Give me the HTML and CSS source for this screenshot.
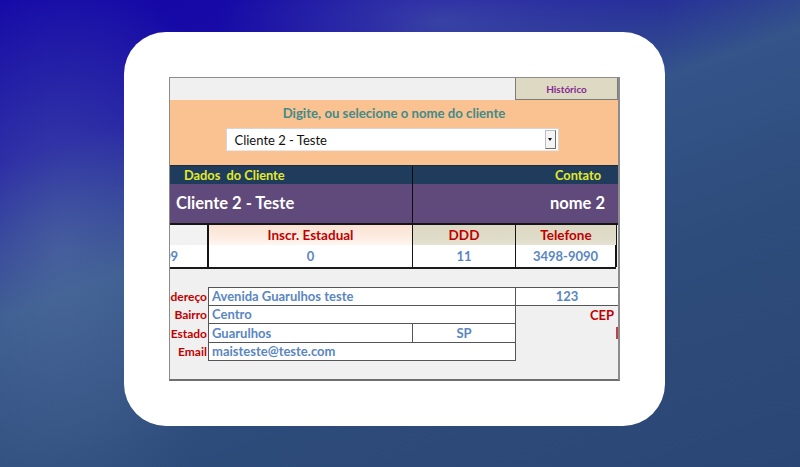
FILE: index.html
```html
<!DOCTYPE html>
<html lang="pt-BR">
<head>
<meta charset="utf-8">
<title>Cadastro de Clientes</title>
<link rel="stylesheet" href="styles.css">
</head>
<body>
<div class="card">
  <div class="sheet">
    <div class="toprow">
      <div class="histbtn">Histórico</div>
    </div>
    <div class="search">
      <div class="search-title">Digite, ou selecione o nome do cliente</div>
      <div class="combo">
        <span class="combo-text">Cliente 2 - Teste</span>
        <span class="combo-btn"><span class="tri"></span></span>
      </div>
    </div>
    <div class="hdr">
      <div class="hdr-l">Dados&nbsp; do Cliente</div>
      <div class="hdr-r">Contato</div>
    </div>
    <div class="names">
      <div class="name-l">Cliente 2 - Teste</div>
      <div class="name-r">nome 2</div>
    </div>
    <div class="grid4 colhead">
      <div class="ch c1"></div>
      <div class="ch c2">Inscr. Estadual</div>
      <div class="ch c3">DDD</div>
      <div class="ch c4">Telefone</div>
    </div>
    <div class="grid4 datarow">
      <div class="dv c1"><span>/0001-09</span></div>
      <div class="dv c2">0</div>
      <div class="dv c3">11</div>
      <div class="dv c4">3498-9090</div>
    </div>
    <div class="lower">
      <div class="addr">
        <div class="lbl">Endereço</div>
        <div class="cell span2 first">Avenida Guarulhos teste</div>
        <div class="cell num first">123<span class="clip">:</span></div>

        <div class="lbl">Bairro</div>
        <div class="cell span2">Centro</div>
        <div class="lbl cep">CEP</div>

        <div class="lbl">Estado</div>
        <div class="cell">Guarulhos</div>
        <div class="cell ctr">SP</div>
        <div class="mark"><span></span></div>

        <div class="lbl">Email</div>
        <div class="cell span2">maisteste@teste.com</div>
        <div class="empty"></div>
      </div>
    </div>
  </div>
</div>
</body>
</html>
```

FILE: styles.css
```css
html, body {
  margin: 0;
  padding: 0;
}
body {
  width: 800px;
  height: 467px;
  overflow: hidden;
  font-family: Lato, "Open Sans", "Liberation Sans", sans-serif;
  background:
    radial-gradient(ellipse 260px 420px at 60px 250px, rgba(90,120,165,0.55), rgba(90,120,165,0) 70%),
    radial-gradient(ellipse 320px 120px at 440px 20px, rgba(90,120,165,0.45), rgba(90,120,165,0) 70%),
    linear-gradient(160deg, #1204a8 0%, #1a0ea6 22%, #34548a 42%, #2e4c7b 65%, #2a4674 100%);
}
.card {
  box-sizing: border-box;
  margin: 32px 0 0 124px;
  width: 541px;
  height: 394px;
  background: #ffffff;
  border-radius: 42px;
  padding: 45px 0 0 45px;
}
.sheet {
  box-sizing: border-box;
  width: 451px;
  height: 304px;
  background: #f0f0f0;
  border: 1px solid #8c8c8c;
  border-right: 2px solid #8c8c8c;
  border-bottom: 2px solid #6e6e6e;
  display: flex;
  flex-direction: column;
}
.toprow {
  height: 22px;
  display: flex;
  justify-content: flex-end;
}
.histbtn {
  box-sizing: border-box;
  width: 103px;
  height: 22px;
  background: #ddd9c3;
  border: 1px solid #7a7a7a;
  border-top: 0;
  color: #862a90;
  font-size: 10px;
  font-weight: 700;
  display: flex;
  align-items: center;
  justify-content: center;
}
.search {
  height: 65px;
  background: #fac191;
  display: flex;
  flex-direction: column;
  align-items: center;
  border-bottom: 1px solid #1d2b3a;
}
.search-title {
  margin-top: 5px;
  color: #428b88;
  font-size: 13.2px;
  font-weight: 700;
  line-height: 17px;
}
.combo {
  box-sizing: border-box;
  margin-top: 6px;
  margin-right: 4px;
  width: 333px;
  height: 23px;
  background: #fff;
  border: 1px solid #d6d6d6;
  border-bottom-color: #e8e8e8;
  display: flex;
  align-items: center;
}
.combo-text {
  flex: 1;
  padding-left: 8px;
  font-size: 13px;
  color: #111;
}
.combo-btn {
  box-sizing: border-box;
  width: 11px;
  height: 19px;
  margin-right: 2px;
  background: #f4f4f4;
  border: 1px solid #bdbdbd;
  border-right-color: #6d6d6d;
  border-bottom-color: #6d6d6d;
  display: flex;
  align-items: center;
  justify-content: center;
}
.tri {
  width: 0;
  height: 0;
  border-left: 2.5px solid transparent;
  border-right: 2.5px solid transparent;
  border-top: 3px solid #111;
}
.hdr {
  display: grid;
  grid-template-columns: 243px 1fr;
  height: 18px;
  background: #1f3c5d;
}
.hdr-l, .hdr-r {
  color: #e2ec2a;
  font-size: 12.8px;
  font-weight: 700;
  line-height: 18px;
}
.hdr-l {
  padding-left: 14px;
  border-right: 1px solid #0d0d0d;
}
.hdr-r {
  text-align: right;
  padding-right: 17px;
}
.names {
  display: grid;
  grid-template-columns: 243px 1fr;
  height: 39px;
  background: #604a7b;
  border-bottom: 2px solid #151515;
}
.name-l, .name-r {
  color: #ffffff;
  font-size: 16.5px;
  font-weight: 700;
  line-height: 39px;
}
.name-l {
  padding-left: 6px;
  border-right: 1px solid #0d0d0d;
}
.name-r {
  text-align: right;
  padding-right: 13px;
}
.grid4 {
  display: grid;
  grid-template-columns: 39px 204px 103px 101px 1fr;
}
.colhead {
  height: 20px;
}
.ch {
  box-sizing: border-box;
  color: #c00000;
  font-size: 13.5px;
  font-weight: 700;
  line-height: 20px;
  text-align: center;
  border-right: 1px solid #141414;
}
.ch.c1 {
  background: #f2f2f2;
  border-right-width: 2px;
}
.ch.c2 {
  background: linear-gradient(#fbe2d2, #fdeee5 70%, #fff6f0);
}
.ch.c3, .ch.c4 {
  background: linear-gradient(#dcd8c3, #dfdcc9 70%, #e6e3d4);
}
.datarow {
  height: 22px;
  border-bottom: 2px solid #1a1a1a;
  margin-right: 2px;
}
.dv {
  box-sizing: border-box;
  background: #fff;
  color: #5a86c1;
  font-size: 13px;
  font-weight: 700;
  line-height: 22px;
  text-align: center;
  border-right: 1px solid #141414;
}
.dv.c1 {
  border-right-width: 2px;
  display: flex;
  justify-content: flex-end;
  overflow: hidden;
  padding-right: 29px;
  white-space: nowrap;
}
.dv.c4 {
  border-right-width: 2px;
}
.lower {
  flex: 1;
  padding-top: 18px;
}
.addr {
  display: grid;
  grid-template-columns: 39px 204px 103px 102px;
  grid-auto-rows: 18.5px;
}
.lbl {
  display: flex;
  justify-content: flex-end;
  align-items: center;
  overflow: hidden;
  white-space: nowrap;
  color: #c00000;
  font-size: 12px;
  font-weight: 700;
  padding-right: 1px;
  border-right: 1px solid #555;
}
.lbl.cep {
  border-right: 0;
  padding-right: 4px;
  font-size: 13px;
}
.cell {
  box-sizing: border-box;
  background: #fff;
  border-right: 1px solid #555;
  border-bottom: 1px solid #555;
  color: #5a86c1;
  font-size: 13px;
  font-weight: 700;
  padding-left: 3px;
  display: flex;
  align-items: center;
  white-space: nowrap;
}
.cell.first {
  border-top: 1px solid #555;
}
.span2 {
  grid-column: span 2;
}
.cell.ctr, .cell.num {
  justify-content: center;
  padding-left: 0;
}
.cell.num {
  border-right: 0;
  position: relative;
}
.clip {
  position: absolute;
  right: -2px;
  top: 2px;
  color: #888;
  font-size: 10px;
}
.mark {
  display: flex;
  justify-content: flex-end;
}
.mark span {
  width: 2px;
  height: 12px;
  margin-top: 3px;
  background: #c04050;
}
.empty {
  display: block;
}
```
